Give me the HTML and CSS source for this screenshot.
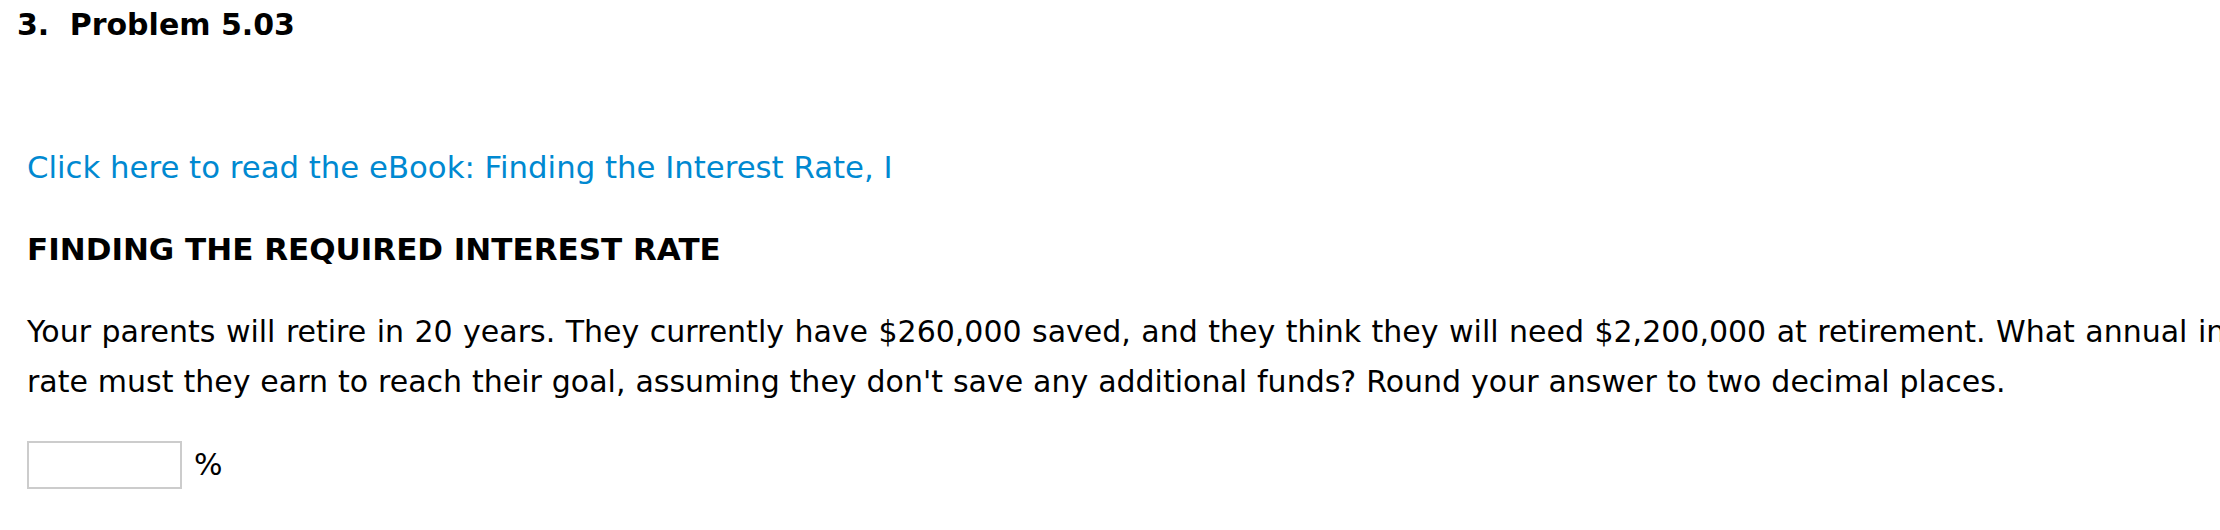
FILE: index.html
```html
<!DOCTYPE html>
<html lang="en">
<head>
<meta charset="utf-8">
<title>Problem 5.03</title>
<link rel="stylesheet" href="styles.css">
</head>
<body>
<div class="page">
  <h1 class="title"><span class="num">3.</span> Problem 5.03</h1>
  <div class="content">
    <p class="ebook"><a href="#" class="link">Click here to read the eBook: Finding the Interest Rate, I</a></p>
    <h2 class="heading">FINDING THE REQUIRED INTEREST RATE</h2>
    <p class="question">Your parents will retire in 20 years. They currently have $260,000 saved, and they think they will need $2,200,000 at retirement. What annual interest rate must they earn to reach their goal, assuming they don't save any additional funds? Round your answer to two decimal places.</p>
    <div class="answer">
      <input class="answer-input" type="text" aria-label="answer">
      <span class="unit">%</span>
    </div>
  </div>
</div>
</body>
</html>
```
FILE: styles.css
```css
html, body {
  margin: 0;
  padding: 0;
  background: #ffffff;
}

body {
  font-family: "DejaVu Sans", Verdana, sans-serif;
  font-size: 30px;
  color: #000000;
  overflow: hidden;
}

.page {
  width: 100%;
  overflow: hidden;
}

.title {
  margin: 0;
  padding-left: 17px;
  font-size: 30px;
  font-weight: bold;
  line-height: 50px;
  white-space: nowrap;
}

.title .num {
  margin-right: 10px;
}

.content {
  margin-top: 92px;
  padding-left: 27px;
}

.ebook {
  margin: 0;
  line-height: 50px;
  font-size: 30.75px;
}

.link {
  color: #0089d1;
  text-decoration: none;
}

.heading {
  margin: 32px 0 0;
  font-size: 31px;
  font-weight: bold;
  line-height: 50px;
}

.question {
  margin: 33px 0 0;
  width: 2286px;
  line-height: 50px;
  text-align: justify;
  word-spacing: 0.4px;
}

.answer {
  margin-top: 33px;
  display: flex;
  align-items: center;
  gap: 12px;
}

.answer-input {
  box-sizing: border-box;
  width: 155px;
  height: 48px;
  margin: 0;
  border: 2px solid #cccccc;
  border-radius: 0;
  background: #ffffff;
  font: inherit;
  padding: 0 6px;
  outline: none;
}

.unit {
  line-height: 50px;
}
```
